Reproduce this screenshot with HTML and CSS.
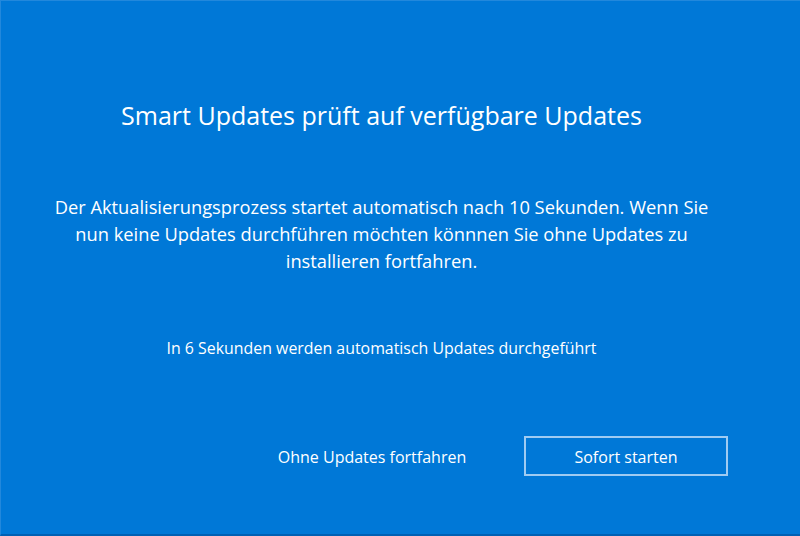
FILE: index.html
```html
<!DOCTYPE html>
<html lang="de">
<head>
<meta charset="utf-8">
<title>Smart Updates</title>
<link rel="stylesheet" href="styles.css">
</head>
<body>
<main class="screen">
  <div class="content">
    <h1 class="title">Smart Updates prüft auf verfügbare Updates</h1>
    <p class="desc">Der Aktualisierungsprozess startet automatisch nach 10 Sekunden. Wenn Sie nun keine Updates durchführen möchten könnnen Sie ohne Updates zu installieren fortfahren.</p>
    <p class="countdown">In 6 Sekunden werden automatisch Updates durchgeführt</p>
  </div>
  <div class="actions">
    <button class="btn btn-link">Ohne Updates fortfahren</button>
    <button class="btn btn-outline">Sofort starten</button>
  </div>
</main>
</body>
</html>
```
FILE: styles.css
```css
html, body {
  margin: 0;
  padding: 0;
  width: 800px;
  height: 536px;
  overflow: hidden;
  background: #0078d7;
}
.screen {
  box-sizing: border-box;
  width: 800px;
  height: 536px;
  background: #0078d7;
  border-top: 1px solid #2288dc;
  border-left: 1px solid #2288dc;
  border-bottom: 2px solid #0060b4;
  color: #ffffff;
  font-family: "Open Sans", "Noto Sans", sans-serif;
  display: flex;
  flex-direction: column;
}
.content {
  padding: 0 38px 0 0;
  display: flex;
  flex-direction: column;
  align-items: center;
  text-align: center;
}
.title {
  margin: 94px 0 0;
  font-size: 25px;
  font-weight: 400;
  line-height: 40px;
}
.desc {
  margin: 58px 0 0;
  width: 676px;
  font-size: 18.3px;
  line-height: 27px;
}
.countdown {
  margin: 62px 0 0;
  font-size: 15.9px;
  line-height: 24px;
}
.actions {
  display: flex;
  justify-content: flex-end;
  gap: 50px;
  padding-right: 72px;
  margin-top: 76px;
}
.btn {
  box-sizing: border-box;
  width: 204px;
  height: 40px;
  font-family: inherit;
  font-size: 16px;
  color: #ffffff;
  background: transparent;
  border: 2px solid transparent;
  padding: 2px 0 0;
}
.btn-outline {
  border-color: #9fcbf2;
}
```
